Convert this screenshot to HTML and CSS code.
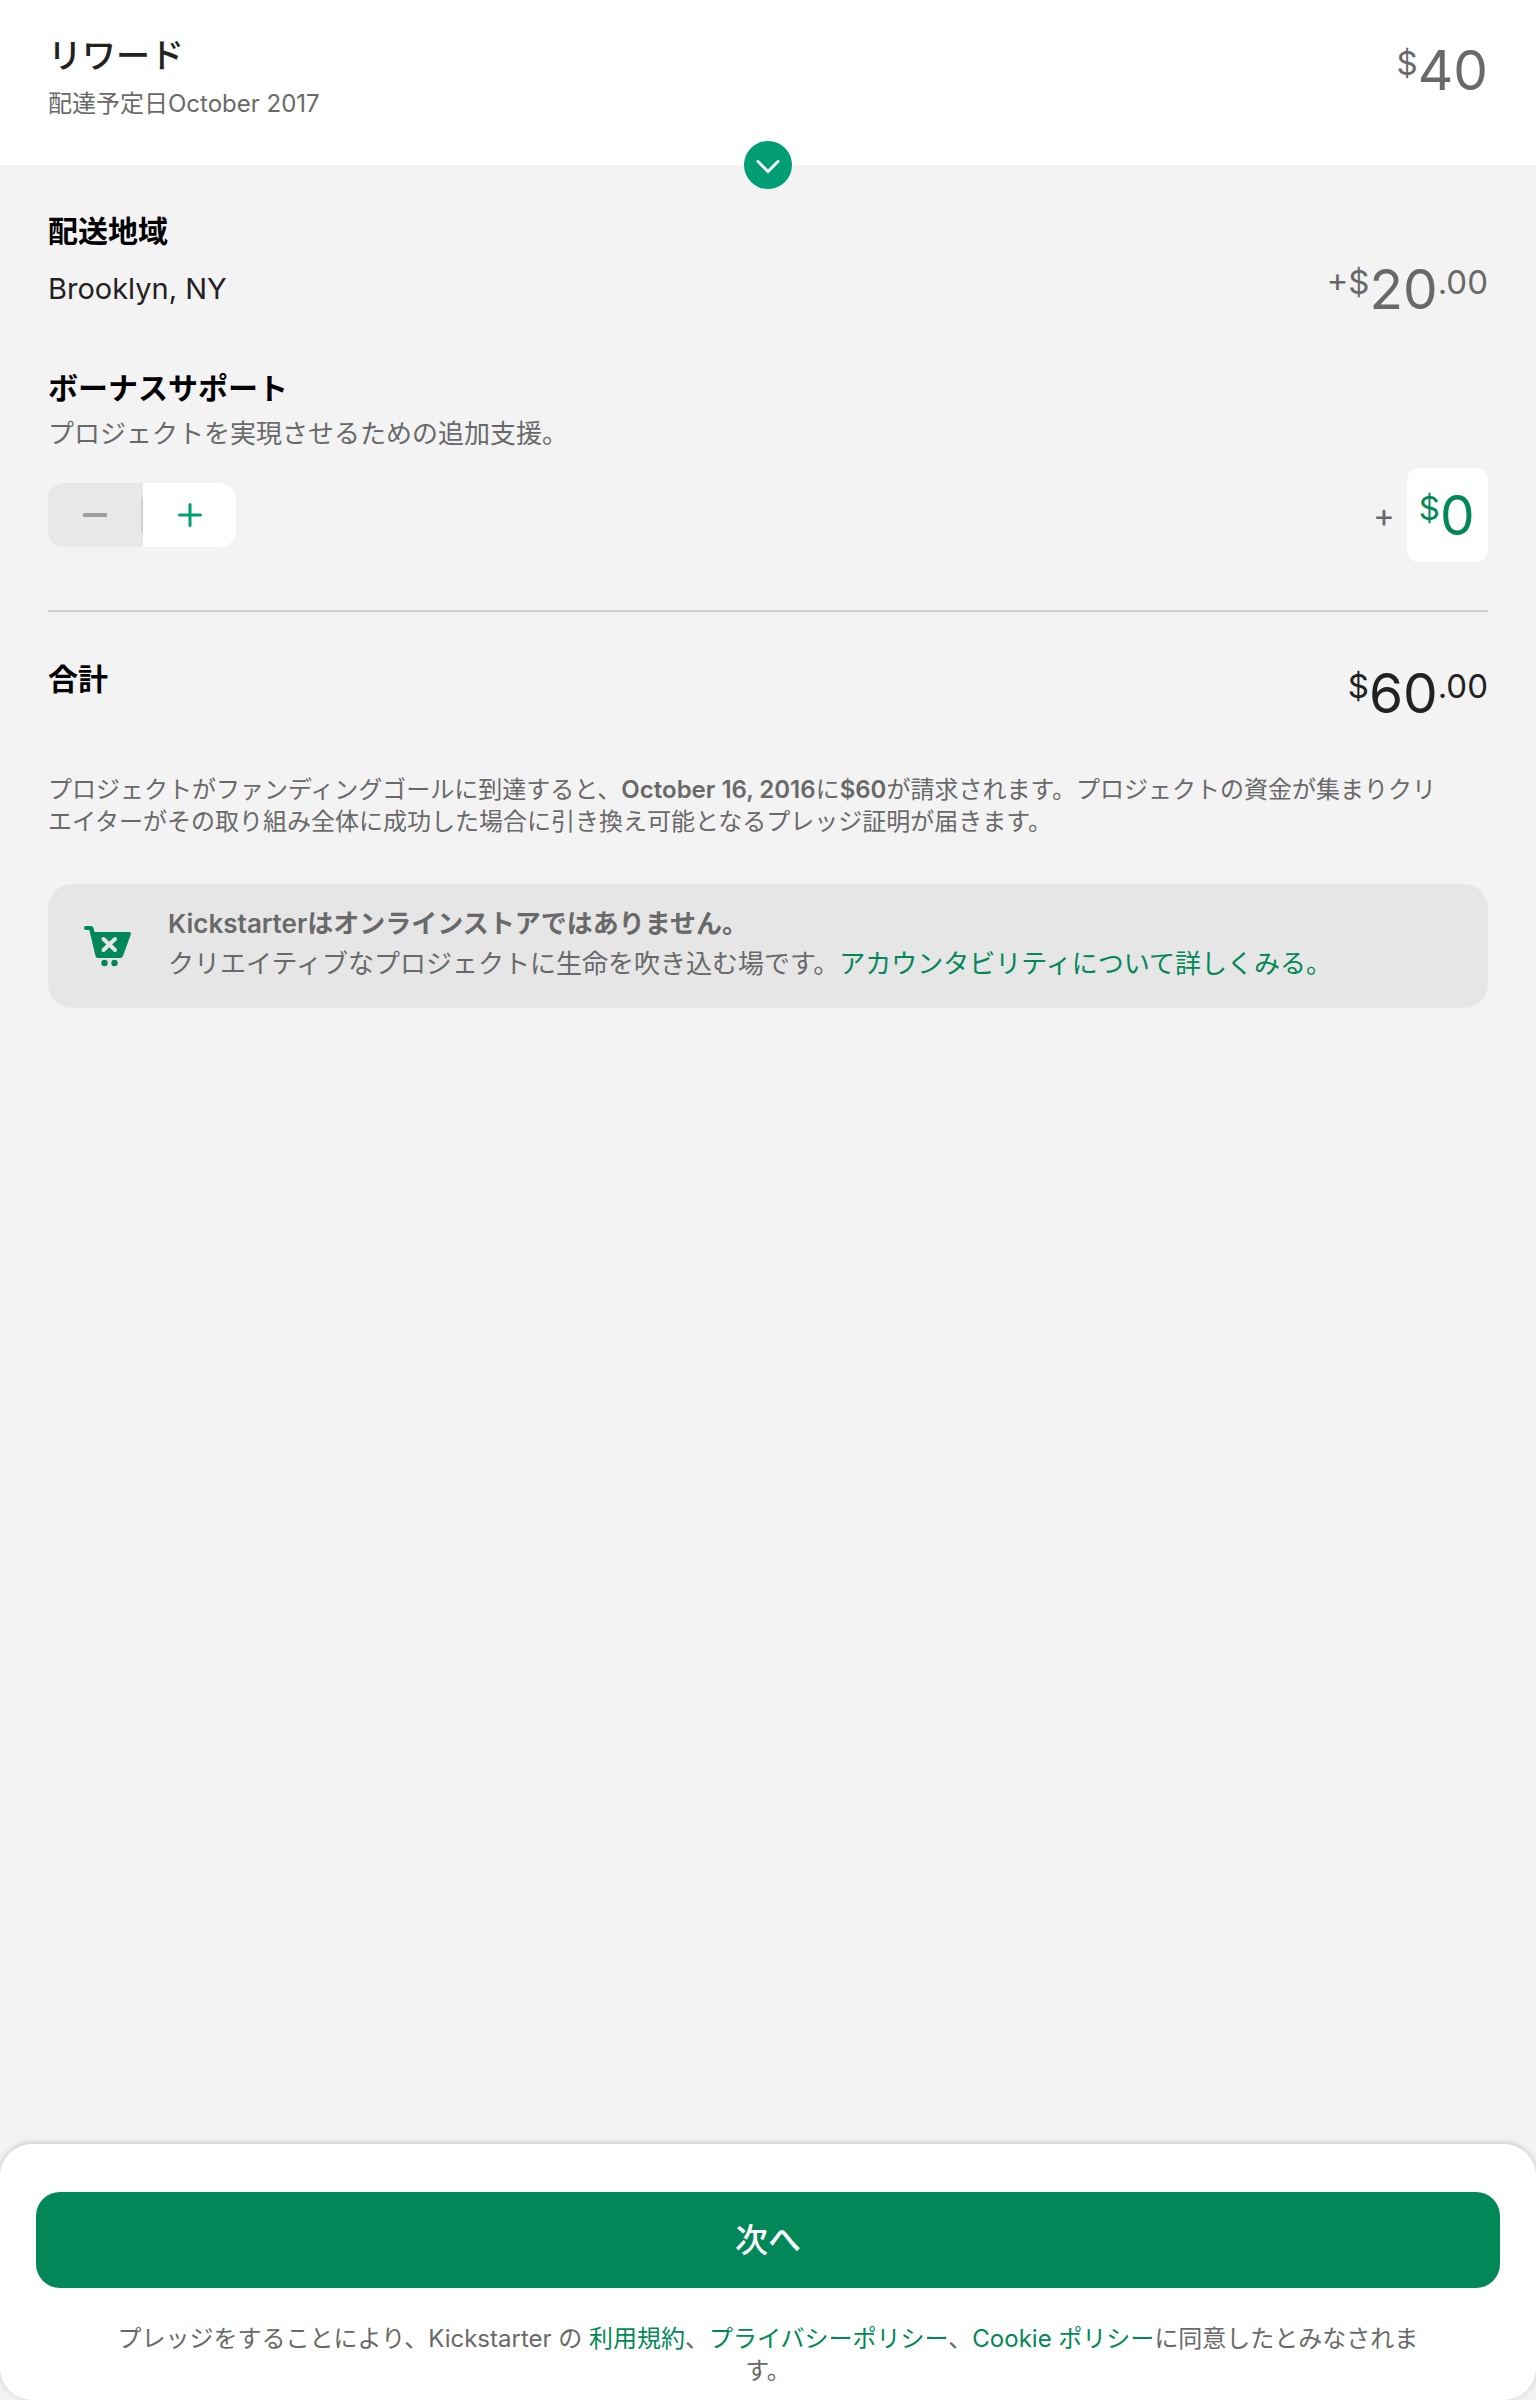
FILE: index.html
```html
<!DOCTYPE html>
<html lang="ja">
<head>
<meta charset="utf-8">
<meta name="viewport" content="width=device-width, initial-scale=1">
<title>リワード</title>
<link rel="stylesheet" href="styles.css">
</head>
<body>
<div class="page">
  <header class="reward">
    <div class="reward-info">
      <h1 class="reward-title">リワード</h1>
      <p class="reward-date">配達予定日October 2017</p>
    </div>
    <p class="price"><span class="unit">$</span>40</p>
    <button class="expand" type="button" aria-label="リワードの詳細を開く">
      <svg width="48" height="48" viewBox="0 0 48 48" aria-hidden="true"><path d="M14 20.500L24 30.500L34 20.500" fill="none" stroke="#fff" stroke-width="3" stroke-linecap="round" stroke-linejoin="miter"/></svg>
    </button>
  </header>

  <main class="pledge">
    <section>
      <h2 class="heading">配送地域</h2>
      <div class="shipping-row">
        <p class="location">Brooklyn, NY</p>
        <p class="price"><span class="unit">+$</span>20<span class="unit">.00</span></p>
      </div>
    </section>

    <section class="bonus">
      <h2 class="heading">ボーナスサポート</h2>
      <p class="bonus-text">プロジェクトを実現させるための追加支援。</p>
      <div class="bonus-row">
        <div class="stepper">
          <button class="step step-minus" type="button" aria-label="減らす" disabled>
            <svg width="24" height="24" viewBox="0 0 24 24" aria-hidden="true"><path d="M1.500 12h21" stroke="#9b9e9e" stroke-width="4" stroke-linecap="round"/></svg>
          </button>
          <span class="step-divider"></span>
          <button class="step step-plus" type="button" aria-label="増やす">
            <svg width="24" height="24" viewBox="0 0 24 24" aria-hidden="true"><path d="M1.500 12h21M12 1.500v21" stroke="#009e74" stroke-width="3" stroke-linecap="round"/></svg>
          </button>
        </div>
        <div class="amount">
          <span class="amount-plus">+</span>
          <label class="amount-box"><span class="unit">$</span><input class="amount-input" type="text" inputmode="numeric" value="0" aria-label="ボーナスサポートの金額"></label>
        </div>
      </div>
    </section>

    <hr class="rule">

    <section class="total">
      <h2 class="heading">合計</h2>
      <p class="price price-total"><span class="unit">$</span>60<span class="unit">.00</span></p>
    </section>

    <p class="terms">プロジェクトがファンディングゴールに到達すると、<strong>October 16, 2016</strong>に<strong>$60</strong>が請求されます。プロジェクトの資金が集まりクリ<br>エイターがその取り組み全体に成功した場合に引き換え可能となるプレッジ証明が届きます。</p>

    <aside class="notice">
      <svg class="cart" width="48" height="42" viewBox="0 0 48 42" aria-hidden="true">
        <path fill="#028858" d="M2 0H7Q9 0 9.500 2L10.500 6H45Q47.500 6 46.800 8.500L39 30Q38.200 32 36 32H14Q12 32 11.500 30L5.300 4H2Q0 4 0 2Q0 0 2 0Z"/>
        <path d="M19.500 13L31 24M31 13L19.500 24" fill="none" stroke="#e6e6e6" stroke-width="4" stroke-linecap="round"/>
        <circle cx="20.500" cy="37" r="3.200" fill="#028858"/>
        <circle cx="30.500" cy="37" r="3.200" fill="#028858"/>
      </svg>
      <div class="notice-text">
        <p class="notice-title">Kickstarterはオンラインストアではありません。</p>
        <p>クリエイティブなプロジェクトに生命を吹き込む場です。<a href="#accountability">アカウンタビリティについて詳しくみる。</a></p>
      </div>
    </aside>
  </main>

  <footer class="footer">
    <button class="next" type="button">次へ</button>
    <p class="legal">プレッジをすることにより、Kickstarter の <a href="#terms">利用規約</a>、<a href="#privacy">プライバシーポリシー</a>、<a href="#cookies">Cookie ポリシー</a>に同意したとみなされます。</p>
  </footer>
</div>
</body>
</html>
```

FILE: styles.css
```css
* {
  box-sizing: border-box;
}

body,
h1,
h2,
p {
  margin: 0;
}

body {
  background: #f3f3f3;
  color: #696969;
  font-family: Inter, "Noto Sans CJK JP", sans-serif;
}

button,
input {
  font: inherit;
  border: 0;
  padding: 0;
}

a {
  color: #028858;
  text-decoration: none;
}

.page {
  display: flex;
  flex-direction: column;
  min-height: 100vh;
}

.reward {
  position: relative;
  display: flex;
  justify-content: space-between;
  align-items: flex-start;
  padding: 38px 48px 45px;
  background: #fff;
}

.reward-title {
  margin-bottom: 14px;
  color: #222;
  font-size: 34px;
  font-weight: 500;
  line-height: 36px;
}

.reward-date {
  font-size: 24px;
  line-height: 32px;
}

.price {
  font-size: 55px;
  line-height: 64px;
  white-space: nowrap;
}

.price-total {
  color: #222;
}

.unit {
  font-size: 33px;
  line-height: 33px;
  vertical-align: 15px;
}

/* Sits over the edge between the header and the form. */
.expand {
  position: absolute;
  left: 50%;
  bottom: 0;
  width: 48px;
  height: 48px;
  border-radius: 50%;
  background: #009e74;
  transform: translate(-50%, 50%);
}

.expand svg {
  display: block;
}

.pledge {
  padding: 48px;
}

.heading {
  color: #000;
  font-size: 30px;
  font-weight: 700;
  line-height: 36px;
}

.shipping-row {
  display: flex;
  justify-content: space-between;
  align-items: center;
  margin-top: 8px;
}

.location {
  color: #222;
  font-size: 29px;
  line-height: 36px;
}

.bonus {
  margin-top: 49px;
}

.bonus-text {
  margin-top: 12px;
  font-size: 26px;
  line-height: 32px;
}

.bonus-row {
  display: flex;
  justify-content: space-between;
  align-items: center;
  margin-top: 18px;
}

.stepper {
  display: flex;
  align-items: center;
  width: 188px;
  height: 64px;
  border-radius: 16px;
  overflow: hidden;
  background: #e8e8e8;
}

.step {
  display: flex;
  flex: 1;
  align-items: center;
  justify-content: center;
  height: 100%;
}

.step-minus {
  background: #e8e8e8;
}

.step-plus {
  background: #fff;
}

.step-divider {
  width: 2px;
  height: 36px;
  background: #d0d0d0;
}

.amount {
  display: flex;
  align-items: center;
  gap: 12px;
}

.amount-plus {
  font-size: 33px;
  line-height: 36px;
}

.amount-box {
  display: block;
  height: 94px;
  padding: 15px 12px;
  border-radius: 12px;
  background: #fff;
  color: #028858;
  font-size: 55px;
  line-height: 64px;
  white-space: nowrap;
}

.amount-input {
  width: 36px;
  height: 64px;
  background: transparent;
  color: inherit;
  outline: 0;
}

.rule {
  height: 2px;
  margin: 48px 0 49px;
  border: 0;
  background: #d0d0d0;
}

.total {
  display: flex;
  justify-content: space-between;
  align-items: flex-start;
}

.terms {
  margin-top: 49px;
  font-size: 24px;
  line-height: 32px;
}

.terms strong {
  font-weight: 600;
}

.notice {
  display: flex;
  align-items: flex-start;
  gap: 36px;
  margin-top: 46px;
  padding: 20px 36px 24px;
  border-radius: 24px;
  background: #e6e6e6;
}

.cart {
  flex: none;
  margin-top: 22px;
}

.notice-text {
  font-size: 26px;
  line-height: 40px;
}

.notice-title {
  font-weight: 600;
}

.footer {
  margin-top: auto;
  padding: 48px 36px 13px;
  border-radius: 32px;
  background: #fff;
  box-shadow: 0 -1px 6px rgba(0, 0, 0, 0.2);
}

.next {
  display: block;
  width: 100%;
  height: 96px;
  padding-bottom: 4px;
  border-radius: 24px;
  background: #028858;
  color: #fff;
  font-size: 33px;
  font-weight: 500;
}

.legal {
  margin-top: 35px;
  padding: 0 64px;
  font-size: 24px;
  line-height: 32px;
  text-align: center;
}
```
